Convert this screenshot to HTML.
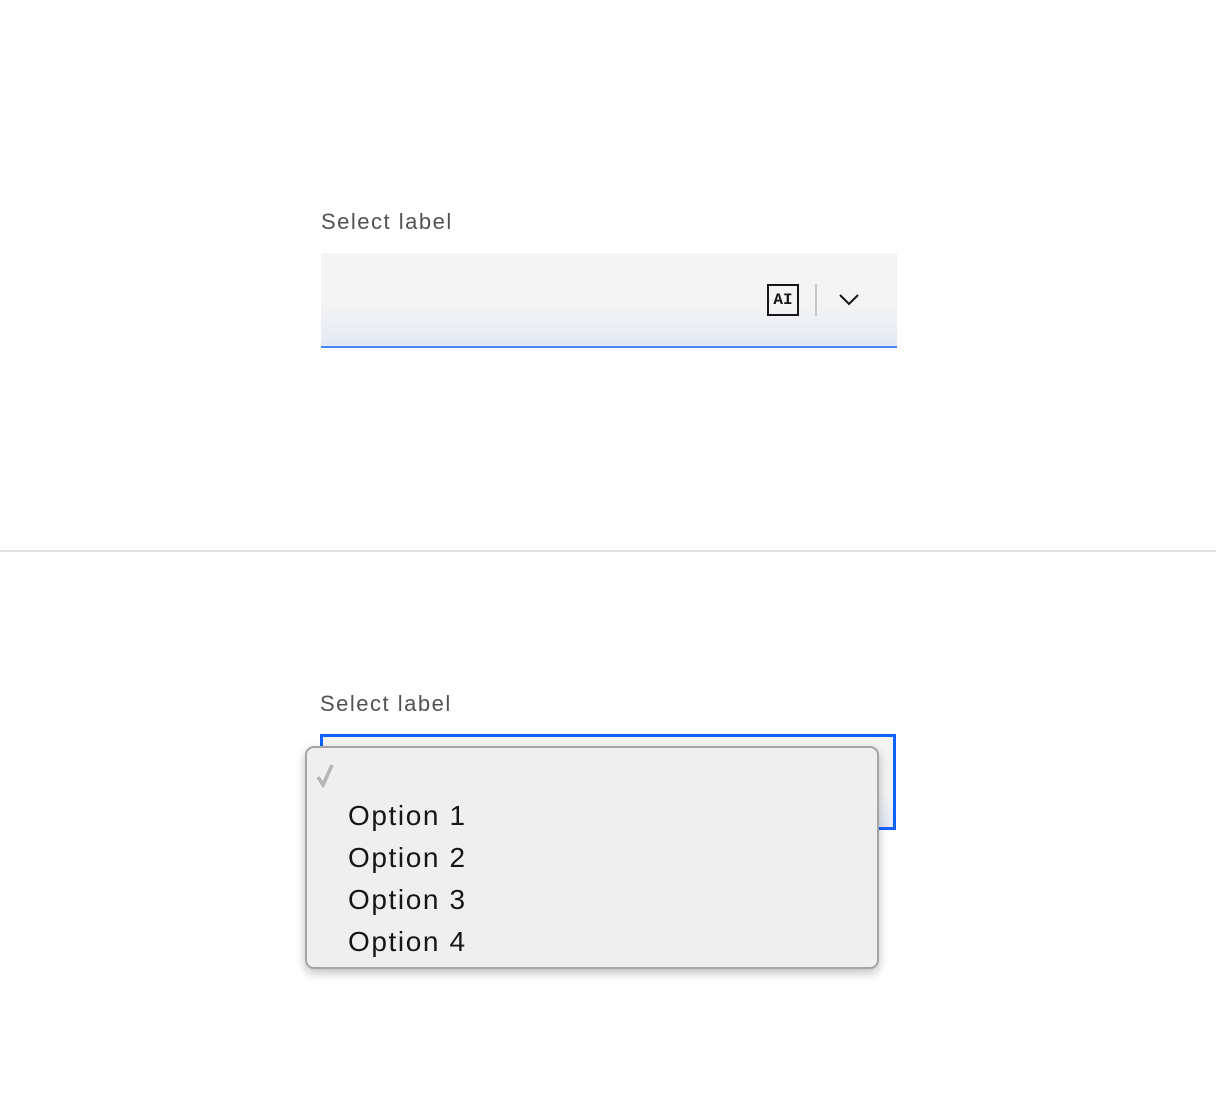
<!DOCTYPE html>
<html><head><style>
body{margin:0;width:1216px;height:1104px;background:#fff;position:relative;font-family:"Liberation Sans",sans-serif;overflow:hidden}
.lbl{position:absolute;font-size:22px;color:#525252;letter-spacing:1.5px}
.f1{position:absolute;left:321px;top:253px;width:576px;height:93px;background:linear-gradient(#f4f4f4 0%,#f4f4f4 55%,#e2e8f4 100%);border-bottom:2px solid #4589ff}
.ai{position:absolute;left:446px;top:31px;width:32px;height:32px;border:2px solid #161616;box-sizing:border-box;font:bold 16px "Liberation Mono",monospace;text-align:center;line-height:28px;color:#161616}
.sep{position:absolute;left:494px;top:31px;width:2px;height:32px;background:#c6c6c6}
.hr{position:absolute;left:0;top:550px;width:1216px;height:2px;background:#e0e0e0}
.f2{position:absolute;left:320px;top:734px;width:576px;height:96px;box-sizing:border-box;border:3px solid #0f62fe;background:linear-gradient(#f4f4f4 60%,#e2e8f4)}
.dd{position:absolute;left:305px;top:746px;width:574px;height:223px;box-sizing:border-box;border:2px solid #a5a5a5;border-radius:9px;background:#efefef;box-shadow:0 4px 10px rgba(0,0,0,.25)}
.opt{position:absolute;left:41px;font-size:28px;color:#161616;letter-spacing:1.6px}
</style></head><body>
<div class="lbl" style="left:321px;top:209px">Select label</div>
<div class="f1"><div class="ai">AI</div><div class="sep"></div>
<svg style="position:absolute;left:516px;top:38px" width="24" height="16" viewBox="0 0 24 16"><path d="M3 4 L12 13 L21 4" fill="none" stroke="#161616" stroke-width="2"/></svg></div>
<div class="hr"></div>
<div class="lbl" style="left:320px;top:691px">Select label</div>
<div class="f2"></div>
<div class="dd">
<svg style="position:absolute;left:8px;top:14px" width="24" height="26" viewBox="0 0 24 26"><path d="M3 15 L8 23 L17 3" fill="none" stroke="#b5b5b5" stroke-width="3.5"/></svg>
<div class="opt" style="top:52px">Option 1</div>
<div class="opt" style="top:94px">Option 2</div>
<div class="opt" style="top:136px">Option 3</div>
<div class="opt" style="top:178px">Option 4</div>
</div>
</body></html>
